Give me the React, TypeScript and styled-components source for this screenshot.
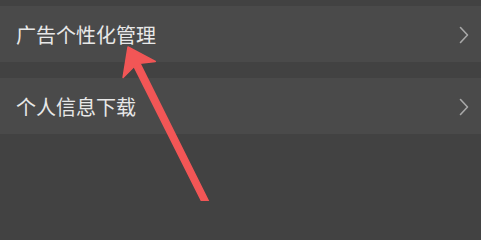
import React from 'react';
import styled, { createGlobalStyle } from 'styled-components';

const GlobalStyle = createGlobalStyle`
    html, body {
        margin: 0;
        padding: 0;
        background: #424242;
    }
    body {
        font-family: "Noto Sans CJK SC", "Noto Sans", sans-serif;
    }
`;

const Page = styled.div`
    position: relative;
    width: 481px;
    height: 201px;
    overflow: hidden;
    background: #424242;
    padding-top: 6px;
    box-sizing: border-box;
    display: flex;
    flex-direction: column;
    gap: 16px;
`;

const Row = styled.div`
    height: 56px;
    background: #4a4a4a;
    display: flex;
    align-items: center;
    justify-content: space-between;
    padding: 2px 11px 0 16px;
    box-sizing: border-box;
`;

const Label = styled.span`
    color: #e8e8e8;
    font-size: 20px;
    line-height: 1;
    letter-spacing: 0;
`;

const Chevron: React.FC = () => (
    <svg width="12" height="18" viewBox="0 0 12 18" fill="none">
        <path d="M2.5 1.5 L9.5 9 L2.5 16.5" stroke="#a8a8a8" strokeWidth="1.6" strokeLinecap="round" strokeLinejoin="round" />
    </svg>
);

const Overlay = styled.svg`
    position: absolute;
    left: 0;
    top: 0;
    pointer-events: none;
`;

// red annotation arrow drawn over the list
const Arrow: React.FC = () => (
    <Overlay width="481" height="201" viewBox="0 0 481 201">
        <path
            d="M128 47 L155.3 61.4 L139.8 63.2 L210.4 205 L203.6 205 L134 66.4 L123.1 77.4 Z"
            fill="#f25656"
            stroke="#f25656"
            strokeWidth="1.5"
            strokeLinejoin="round"
        />
    </Overlay>
);

const items = ['广告个性化管理', '个人信息下载'];

const App: React.FC = () => (
    <>
        <GlobalStyle />
        <Page>
            {items.map(item => (
                <Row key={item}>
                    <Label>{item}</Label>
                    <Chevron />
                </Row>
            ))}
            <Arrow />
        </Page>
    </>
);

export default App;
